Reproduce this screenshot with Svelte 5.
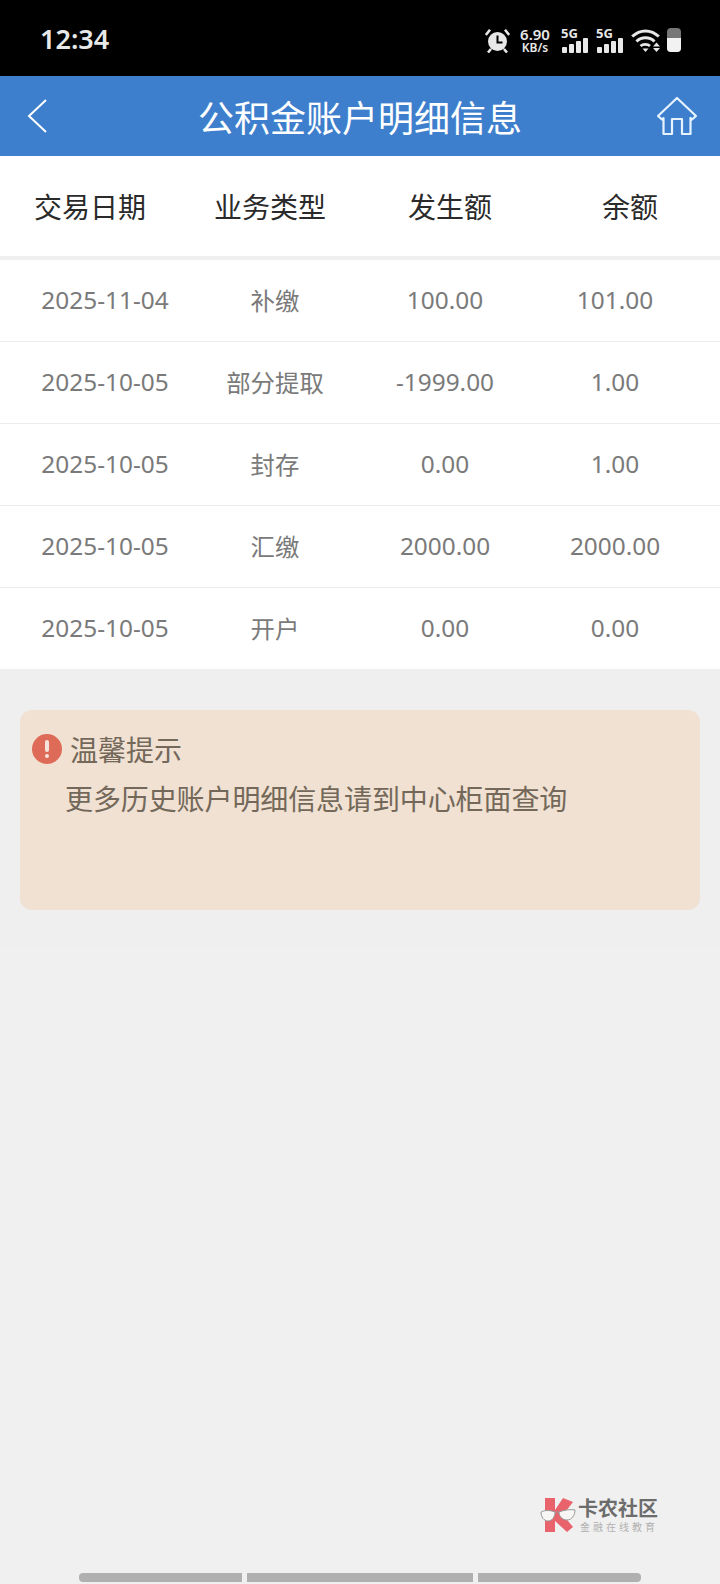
<script>
	const rows = [
		['2025-11-04', '补缴', '100.00', '101.00'],
		['2025-10-05', '部分提取', '-1999.00', '1.00'],
		['2025-10-05', '封存', '0.00', '1.00'],
		['2025-10-05', '汇缴', '2000.00', '2000.00'],
		['2025-10-05', '开户', '0.00', '0.00']
	];
	const heads = ['交易日期', '业务类型', '发生额', '余额'];
	const bars = [6, 9, 12, 15];
</script>

<div class="page">
	<div class="status">
		<span class="time">12:34</span>
		<div class="status-right">
			<svg class="alarm" viewBox="0 0 25 25" width="25" height="25">
				<circle cx="12.500" cy="13.500" r="9.500" fill="#e8e8e8" />
				<path d="M12.500 7.500V14.500H17.500" fill="none" stroke="#000" stroke-width="2" />
				<path d="M0.800 7L5 1.800M24.200 7L20 1.800M6 21L3 24.500M19 21L22 24.500" stroke="#e8e8e8" stroke-width="2.600" fill="none" />
			</svg>
			<div class="speed"><b>6.90</b><b class="unit">KB/s</b></div>
			{#each [0, 1] as sim}
				<div class="sim">
					<span class="net">5G</span>
					<div class="bars">
						{#each bars as h}
							<i style="height: {h}px"></i>
						{/each}
					</div>
				</div>
			{/each}
			<svg class="wifi" viewBox="0 0 30 24" width="30" height="24">
				<path d="M1.200 8.500C9 1 20 1 27.800 8.500" fill="none" stroke="#e8e8e8" stroke-width="3" />
				<path d="M5.500 13.500C10.500 8.500 18.500 8.500 23.500 13.500" fill="none" stroke="#e8e8e8" stroke-width="3" />
				<path d="M9.500 18C12 15.800 16.500 15.800 19 18" fill="none" stroke="#e8e8e8" stroke-width="2.800" />
				<path d="M11.500 20.500H17.500L14.500 24Z" fill="#e8e8e8" />
				<path d="M25.500 14.500L29 18.500H22ZM25.500 24L22 20H29Z" fill="#e8e8e8" />
			</svg>
			<div class="battery"><div class="level"></div></div>
		</div>
	</div>

	<header class="topbar">
		<svg class="back" viewBox="0 0 22 36" width="22" height="36">
			<path d="M20 2L3 18L20 34" fill="none" stroke="#fff" stroke-width="2" />
		</svg>
		<h1>公积金账户明细信息</h1>
		<svg class="home" viewBox="0 0 42 40" width="42" height="40">
			<path d="M2 20L21 2L40 20L36 23.500L34.500 22V38H26V23H16V38H7.500V22L6 23.500Z" fill="none" stroke="#e6f3ff" stroke-width="2.200" stroke-linejoin="round" />
		</svg>
	</header>

	<div class="thead">
		{#each heads as h}
			<div>{h}</div>
		{/each}
	</div>

	<div class="tbody">
		{#each rows as row}
			<div class="row">
				{#each row as cell}
					<div>{cell}</div>
				{/each}
			</div>
		{/each}
	</div>

	<section class="tip-wrap">
		<div class="tip">
			<div class="tip-title">
				<span class="warn"><i></i><i class="dot"></i></span>
				<span>温馨提示</span>
			</div>
			<p>更多历史账户明细信息请到中心柜面查询</p>
		</div>
	</section>

	<div class="logo">
		<svg viewBox="0 0 36 36" width="36" height="36">
			<path d="M5 1H15V13L23 1L33 5L23 18L33 30L27 35L15 24V35H5Z" fill="#e8636c" />
			<path d="M1 15C5 13 10 13 15 15C15 20 12 24 8 24C4 24 1 20 1 15Z" fill="#f8f5f5" stroke="#999" stroke-width="1" />
			<path d="M19 15C24 13 30 12 35 13C35 18 32 23 27 23C23 23 19 20 19 15Z" fill="#f8f5f5" stroke="#999" stroke-width="1" />
			<path d="M15 15.500Q17 14 19 15.500" fill="none" stroke="#999" stroke-width="1" />
		</svg>
		<div class="logo-text">
			<b>卡农社区</b>
			<small>金融在线教育</small>
		</div>
	</div>

	<div class="nav-bar">
		<i style="width: 163px"></i>
		<i style="width: 226px"></i>
		<i style="width: 163px"></i>
	</div>
</div>

<style>
	:global(body) {
		margin: 0;
		background: #f0f0f0;
	}

	.page {
		position: relative;
		width: 720px;
		height: 1584px;
		overflow: hidden;
		background: #f0f0f0;
		font-family: "Noto Sans CJK SC", "Noto Sans", sans-serif;
	}

	.status {
		height: 76px;
		background: #000;
		color: #e8e8e8;
		display: flex;
		align-items: center;
		justify-content: space-between;
		padding: 0 39px 0 40px;
		box-sizing: border-box;
	}

	.time {
		font-family: "Noto Sans", sans-serif;
		font-size: 27px;
		font-weight: 600;
	}

	.status-right {
		display: flex;
		align-items: center;
		padding-top: 4px;
	}

	.speed {
		display: flex;
		flex-direction: column;
		align-items: center;
		width: 30px;
		margin: 0 11px 0 10px;
		font-family: "Noto Sans", sans-serif;
		font-size: 15px;
		line-height: 15px;
	}

	.speed b {
		font-weight: 600;
	}

	.speed .unit {
		font-size: 12px;
		line-height: 11px;
	}

	.sim {
		position: relative;
		width: 28px;
		height: 25px;
		margin-right: 7px;
	}

	.net {
		position: absolute;
		left: 0;
		top: -2px;
		font-family: "Noto Sans", sans-serif;
		font-size: 13px;
		font-weight: 700;
		line-height: 14px;
	}

	.bars {
		position: absolute;
		left: 1px;
		bottom: 0;
		display: flex;
		align-items: flex-end;
		gap: 2px;
	}

	.bars i {
		width: 5px;
		background: #e8e8e8;
		border-radius: 1px;
	}

	.battery {
		width: 14px;
		height: 24px;
		margin-left: 6px;
		border-radius: 4px;
		background: #777;
		overflow: hidden;
		display: flex;
		align-items: flex-end;
	}

	.level {
		width: 100%;
		height: 14px;
		background: #f2f2f2;
	}

	.topbar {
		position: relative;
		height: 80px;
		background: #3e7fcd;
		display: flex;
		align-items: center;
		justify-content: center;
	}

	.topbar h1 {
		margin: 0;
		color: #fff;
		font-size: 36px;
		font-weight: 400;
		line-height: 1;
	}

	.back {
		position: absolute;
		left: 26px;
		top: 22px;
	}

	.home {
		position: absolute;
		left: 656px;
		top: 20px;
	}

	.thead {
		height: 100px;
		background: #fff;
		border-bottom: 4px solid #f0f0f0;
		display: grid;
		grid-template-columns: repeat(4, 180px);
		align-items: center;
		text-align: center;
		font-size: 28px;
		color: #2a2a2a;
	}

	.tbody {
		background: #fff;
	}

	.row {
		height: 79px;
		padding: 0 20px 2px;
		display: grid;
		grid-template-columns: repeat(4, 170px);
		align-items: center;
		text-align: center;
		font-family: "Noto Sans", "Noto Sans CJK SC", sans-serif;
		font-size: 24.4px;
		color: #7a7a7a;
		border-bottom: 1px solid #ececec;
	}

	.row:last-child {
		border-bottom: none;
	}

	.tip-wrap {
		background: #efefef;
		padding: 41px 20px 39px;
	}

	.tip {
		height: 200px;
		box-sizing: border-box;
		background: #f0e1d2;
		border-radius: 12px;
		color: #736859;
		padding: 21px 12px 0;
	}

	.tip-title {
		display: flex;
		align-items: center;
		gap: 8px;
		font-size: 28px;
		line-height: 36px;
	}

	.warn {
		width: 30px;
		height: 30px;
		border-radius: 50%;
		background: #de6a58;
		display: flex;
		flex-direction: column;
		align-items: center;
		padding-top: 6px;
		box-sizing: border-box;
		gap: 2px;
	}

	.warn i {
		width: 4px;
		height: 12px;
		background: #f6e4dc;
		border-radius: 2px;
	}

	.warn .dot {
		height: 4px;
	}

	.tip p {
		margin: 11px 0 0 33px;
		font-size: 28px;
		line-height: 40px;
		letter-spacing: -0.1px;
	}

	.logo {
		position: absolute;
		left: 540px;
		top: 1497px;
		display: flex;
		align-items: flex-start;
		gap: 2px;
	}

	.logo-text {
		display: flex;
		flex-direction: column;
		color: #6c6c6c;
		line-height: 1;
		padding-top: 1px;
	}

	.logo-text b {
		font-size: 20px;
		font-weight: 700;
	}

	.logo-text small {
		font-size: 10px;
		color: #b0b0b0;
		letter-spacing: 3px;
		margin: 4px 0 0 2px;
	}

	.nav-bar {
		position: absolute;
		left: 79px;
		top: 1573px;
		display: flex;
		gap: 5px;
	}

	.nav-bar i {
		height: 9px;
		background: #b0b0b0;
	}

	.nav-bar i:first-child {
		border-radius: 4px 0 0 4px;
	}

	.nav-bar i:last-child {
		border-radius: 0 4px 4px 0;
	}
</style>
